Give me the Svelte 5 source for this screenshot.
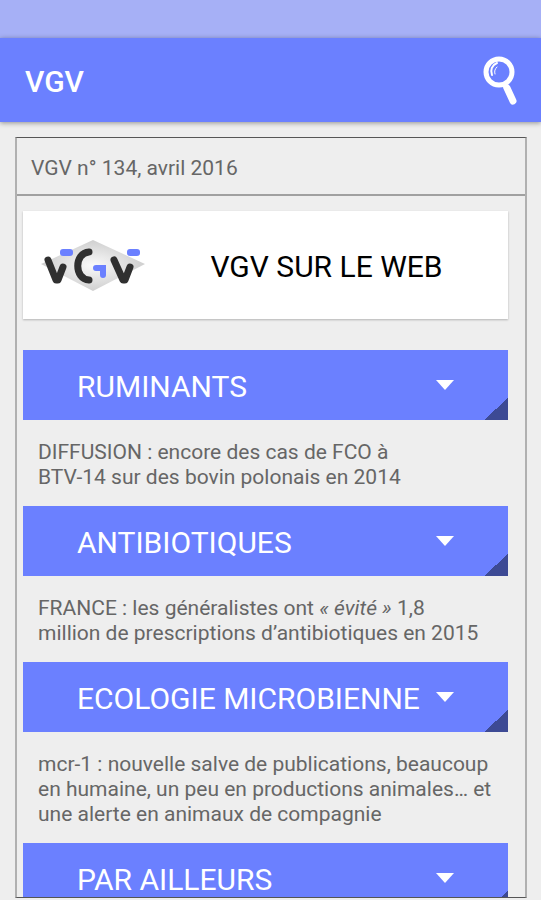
<script lang="ts">
	interface Part {
		text: string;
		em?: boolean;
	}

	interface Section {
		title: string;
		summary: Part[];
	}

	// line breaks in the summaries are kept (white-space: pre-line)
	const sections: Section[] = [
		{
			title: 'RUMINANTS',
			summary: [
				{ text: 'DIFFUSION : encore des cas de FCO à\nBTV-14 sur des bovin polonais en 2014' },
			],
		},
		{
			title: 'ANTIBIOTIQUES',
			summary: [
				{ text: 'FRANCE : les généralistes ont ' },
				{ text: '« évité »', em: true },
				{ text: ' 1,8' },
				{ text: '\nmillion de prescriptions d’antibiotiques en 2015' },
			],
		},
		{
			title: 'ECOLOGIE MICROBIENNE',
			summary: [
				{
					text: 'mcr-1 : nouvelle salve de publications, beaucoup en humaine, un peu en productions animales… et une alerte en animaux de compagnie',
				},
			],
		},
		{ title: 'PAR AILLEURS', summary: [] },
	];
</script>

<div class="app">
	<div class="status"></div>

	<header class="bar">
		<h1 class="bar__title">VGV</h1>
		<button class="bar__search" type="button" aria-label="Rechercher">
			<svg width="36" height="52" viewBox="0 0 36 52" fill="none" stroke="#fff">
				<circle cx="16" cy="18" r="13" stroke-width="5" />
				<path d="M9 21c-2-5 0-10 5-12" stroke-width="2" stroke-linecap="round" />
				<path d="M12 20c-1-3 0-5 2-7" stroke-width="1" stroke-linecap="round" />
				<path d="M21 30l3 5" stroke-width="5" />
				<path d="M24 34l6 13" stroke-width="7" stroke-linecap="round" />
			</svg>
		</button>
	</header>

	<main class="panel">
		<h2 class="panel__issue">VGV n° 134, avril 2016</h2>

		<div class="panel__body">
			<a class="web" href="#web">
				<svg class="web__logo" width="104" height="52" viewBox="0 0 104 52" fill="none">
					<defs>
						<radialGradient id="diamond">
							<stop offset="0" stop-color="#fafafa" />
							<stop offset="1" stop-color="#cfcfcf" />
						</radialGradient>
					</defs>
					<path d="M0 25L52 1l52 24-52 27z" fill="url(#diamond)" />
					<g stroke="#303030" stroke-width="7" stroke-linecap="round" stroke-linejoin="round">
						<path d="M7 21l8 20h2l5-13" />
						<path d="M73 21l9 20h2l5-13" />
						<path d="M48 13c-15 1-15 27 0 28" />
					</g>
					<path
						d="M55 29h7v7"
						stroke="#6b80ff"
						stroke-width="6"
						stroke-linecap="round"
						stroke-linejoin="miter"
					/>
					<rect x="19" y="10" width="13" height="7" rx="3" fill="#6b80ff" />
					<rect x="86" y="10" width="13" height="7" rx="3" fill="#6b80ff" />
				</svg>
				<span class="web__label">VGV SUR LE WEB</span>
			</a>

			{#each sections as section}
				<section>
					<button class="head" type="button" aria-haspopup="true">
						<span class="head__title">{section.title}</span>
						<svg class="head__arrow" width="18" height="10" viewBox="0 0 18 10">
							<path d="M0 0h18l-9 10z" fill="#fff" />
						</svg>
					</button>
					{#if section.summary.length}
						<p class="summary">
							{#each section.summary as part}{#if part.em}<em>{part.text}</em>{:else}{part.text}{/if}{/each}
						</p>
					{/if}
				</section>
			{/each}
		</div>
	</main>
</div>

<style>
	:global(body) {
		background: #eee;
	}

	.app {
		display: flex;
		flex-direction: column;
		height: 100vh;
		overflow: hidden;
		background: #eee;
		color: #666;
		font-family: Roboto, 'Liberation Sans', sans-serif;
	}

	button {
		border: 0;
		font: inherit;
		cursor: pointer;
	}

	.status {
		flex: none;
		height: 38px;
		background: #a6b0f6;
	}

	.bar {
		flex: none;
		display: flex;
		align-items: center;
		justify-content: space-between;
		box-sizing: border-box;
		height: 84px;
		padding: 0 22px 0 25px;
		background: #6b80ff;
		box-shadow: 0 1px 5px rgba(0, 0, 0, 0.4);
	}

	.bar__title {
		margin: 0;
		padding-top: 3px;
		color: #fff;
		font-size: 30px;
		font-weight: 500;
		line-height: 36px;
	}

	.bar__search {
		display: flex;
		padding: 0;
		background: none;
	}

	.panel {
		flex: 1;
		display: flex;
		flex-direction: column;
		min-height: 0;
		margin: 15px 14px 2px 15px;
		border: 1px solid #555;
		border-width: 1px 2px;
		border-color: #555 #b0b0b0;
	}

	.panel__issue {
		flex: none;
		margin: 0;
		padding: 18px 14px 13px;
		border-bottom: 2px solid #a0a0a0;
		font-size: 21px;
		font-weight: 400;
		line-height: 25px;
	}

	.panel__body {
		flex: 1;
		min-height: 0;
		padding: 15px 17px 0 6px;
		overflow: hidden;
	}

	.web {
		display: flex;
		align-items: center;
		box-sizing: border-box;
		height: 108px;
		margin-bottom: 31px;
		padding: 0 18px;
		background: #fff;
		box-shadow: 0 1px 2px rgba(0, 0, 0, 0.25);
		color: #000;
		text-decoration: none;
	}

	.web__logo {
		flex: none;
	}

	.web__label {
		flex: 1;
		padding: 3px 0 0 18px;
		font-size: 30px;
		line-height: 36px;
		text-align: center;
	}

	.head {
		display: flex;
		align-items: center;
		justify-content: space-between;
		width: 100%;
		height: 70px;
		padding: 0 54px;
		background: linear-gradient(to bottom right, transparent 50%, #3d4a94 50%) right bottom / 24px 22px no-repeat #6b80ff;
		color: #fff;
		text-align: left;
	}

	.head__title {
		padding-top: 3px;
		font-size: 30px;
		line-height: 36px;
		white-space: nowrap;
	}

	.head__arrow {
		flex: none;
	}

	.summary {
		margin: 0;
		padding: 20px 0 16px 15px;
		font-size: 21px;
		line-height: 25px;
		white-space: pre-line;
	}
</style>
